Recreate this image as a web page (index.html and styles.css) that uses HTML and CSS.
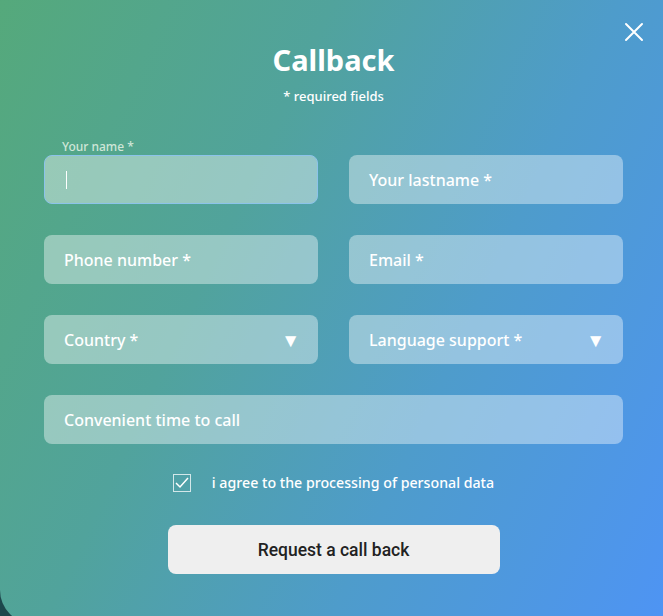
FILE: index.html
```html
<!DOCTYPE html>
<html lang="en">
<head>
  <meta charset="UTF-8" />
  <meta name="viewport" content="width=device-width, initial-scale=1.0"/>
  <title>Callback</title>
  <link rel="stylesheet" href="styles.css">
</head>
<body>
  <div class="modal">
    <button class="close" type="button" aria-label="Close">
      <svg width="20" height="20" viewBox="0 0 20 20"><path d="M2 2 L18 18 M18 2 L2 18" stroke="#fff" stroke-width="2" stroke-linecap="round"/></svg>
    </button>

    <div class="content">
      <h1>Callback</h1>
      <p class="subtitle">* required fields</p>

      <form class="form">
        <div class="field focused">
          <label class="float-label">Your name *</label>
          <span class="caret"></span>
        </div>
        <div class="field">Your lastname *</div>
        <div class="field">Phone number *</div>
        <div class="field">Email *</div>
        <div class="field select">Country * <span class="arrow">&#9660;</span></div>
        <div class="field select">Language support * <span class="arrow">&#9660;</span></div>
        <div class="field wide">Convenient time to call</div>
      </form>

      <label class="agree">
        <span class="checkbox">
          <svg width="14" height="12" viewBox="0 0 14 12"><path d="M1 6 L5 10 L13 1" fill="none" stroke="#fff" stroke-width="1.5"/></svg>
        </span>
        i agree to the processing of personal data
      </label>

      <div class="actions">
        <button class="submit" type="button">Request a call back</button>
      </div>
    </div>
  </div>
</body>
</html>
```

FILE: styles.css
```css
html, body {
  margin: 0;
  height: 100%;
  overflow: hidden;
}

body {
  background: #1d474c;
  font-family: 'Noto Sans', sans-serif;
  color: #fff;
}

.modal {
  position: relative;
  box-sizing: border-box;
  width: 663px;
  height: 624px;
  padding-top: 40px;
  background: linear-gradient(115deg, #55a97b 0%, #51a39c 35%, #4e9ccb 65%, #4e94f4 100%);
  border-bottom-left-radius: 34px;
}

.content {
  width: 579px;
  margin-left: 44px;
}

.close {
  position: absolute;
  top: 22px;
  right: 19px;
  width: 20px;
  height: 20px;
  padding: 0;
  border: none;
  background: none;
  cursor: pointer;
}

h1 {
  margin: 0;
  font-size: 29px;
  line-height: 40px;
  font-weight: 700;
  text-align: center;
}

.subtitle {
  margin: 7px 0 0;
  font-size: 13px;
  line-height: 18px;
  font-weight: 500;
  text-align: center;
}

.form {
  display: grid;
  grid-template-columns: 274px 274px;
  column-gap: 31px;
  row-gap: 31px;
  margin-top: 50px;
}

.field {
  position: relative;
  display: flex;
  align-items: center;
  box-sizing: border-box;
  height: 49px;
  padding: 0 20px;
  border-radius: 8px;
  background: rgba(255, 255, 255, 0.4);
  font-size: 16px;
  font-weight: 500;
  color: #fff;
}

.field.focused {
  border: 1px solid #8cc3ea;
  padding-left: 21px;
}

.float-label {
  position: absolute;
  left: 17px;
  top: -18px;
  font-size: 12px;
  color: #cfe6d8;
}

.caret {
  width: 1px;
  height: 18px;
  background: #fff;
}

.select {
  justify-content: space-between;
}

.arrow {
  font-size: 19px;
  margin-right: -2px;
}

.wide {
  grid-column: 1 / 3;
}

.agree {
  display: flex;
  align-items: center;
  justify-content: center;
  gap: 21px;
  margin-top: 29px;
  font-size: 14.2px;
  font-weight: 500;
}

.checkbox {
  display: flex;
  align-items: center;
  justify-content: center;
  box-sizing: border-box;
  width: 18px;
  height: 18px;
  border: 1px solid rgba(255, 255, 255, 0.75);
}

.actions {
  display: flex;
  justify-content: center;
  margin-top: 33px;
}

.submit {
  width: 332px;
  height: 49px;
  border: none;
  border-radius: 8px;
  background: #efefef;
  font-family: Roboto, sans-serif;
  font-size: 17.5px;
  font-weight: 500;
  color: #222;
  cursor: pointer;
}
```
